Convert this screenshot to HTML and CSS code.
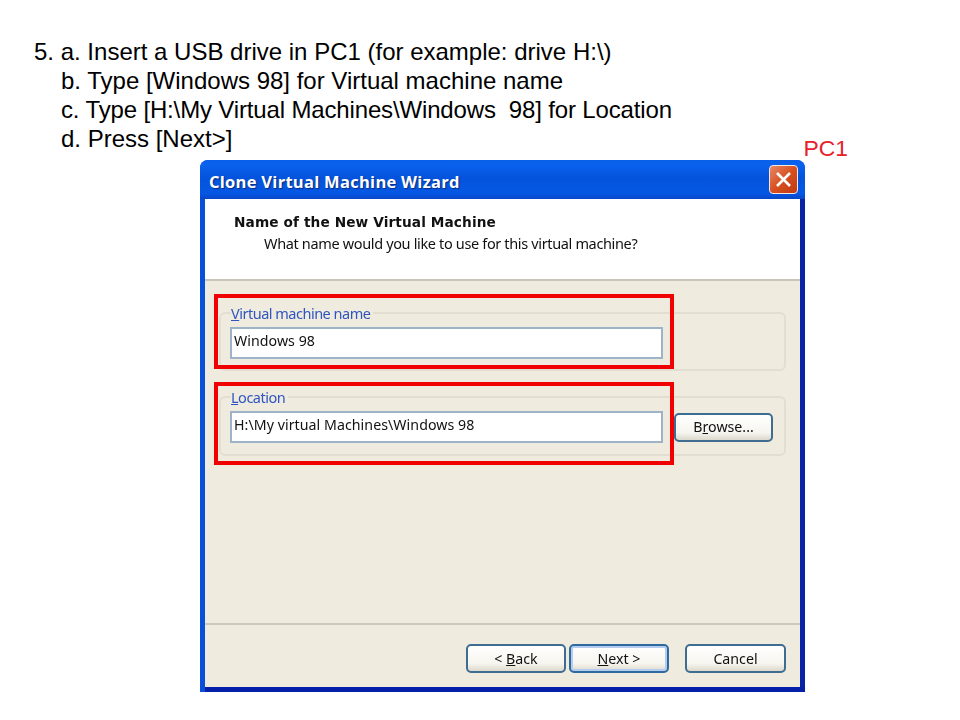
FILE: index.html
```html
<!DOCTYPE html>
<html lang="en">
<head>
  <meta charset="UTF-8" />
  <title>Clone Virtual Machine Wizard</title>
  <link rel="stylesheet" href="styles.css">
</head>
<body>
  <div class="slide">
    <div class="top">
      <div class="steps">
        <p>5. a. Insert a USB drive in PC1 (for example: drive H:\)</p>
        <p class="sub">b. Type [Windows 98] for Virtual machine name</p>
        <p class="sub tight">c. Type [H:\My Virtual Machines\Windows&nbsp; 98] for Location</p>
        <p class="sub">d. Press [Next&gt;]</p>
      </div>
      <div class="pc-label">PC1</div>
    </div>

    <div class="window">
      <div class="titlebar">
        <span class="title">Clone Virtual Machine Wizard</span>
        <div class="close">
          <svg width="19" height="19" viewBox="0 0 19 19">
            <path d="M3 3 L16 16 M16 3 L3 16" stroke="#fff" stroke-width="2.6" fill="none" />
          </svg>
        </div>
      </div>

      <div class="client">
        <div class="header">
          <h1>Name of the New Virtual Machine</h1>
          <p>What name would you like to use for this virtual machine?</p>
        </div>

        <div class="content">
          <div class="group name-group">
            <span class="legend"><u>V</u>irtual machine name</span>
            <input type="text" value="Windows 98">
          </div>
          <div class="group location-group">
            <span class="legend"><u>L</u>ocation</span>
            <div class="row">
              <input type="text" value="H:\My virtual Machines\Windows 98">
              <button class="browse">B<u>r</u>owse...</button>
            </div>
          </div>
          <div class="mark mark-name"></div>
          <div class="mark mark-location"></div>
        </div>

        <div class="footer">
          <button>&lt; <u>B</u>ack</button>
          <button class="default"><u>N</u>ext &gt;</button>
          <button class="cancel">Cancel</button>
        </div>
      </div>
    </div>
  </div>
</body>
</html>
```

FILE: styles.css
```css
body {
  margin: 0;
  background: #fff;
  font-family: "Liberation Sans", Arial, sans-serif;
}

.slide {
  width: 960px;
  height: 720px;
  overflow: hidden;
}

.top {
  height: 160px;
  display: flex;
  justify-content: space-between;
  box-sizing: border-box;
  padding: 37px 112px 0 34px;
}

.steps {
  font-size: 24px;
  line-height: 29px;
  color: #000;
}

.steps p {
  margin: 0;
}

.steps .sub {
  padding-left: 27px;
}

.steps .tight {
  letter-spacing: -0.15px;
}

.pc-label {
  color: #e8202a;
  font-size: 22.9px;
  line-height: 24px;
  margin-top: 99px;
}

.window {
  width: 605px;
  height: 532px;
  margin-left: 200px;
  display: flex;
  flex-direction: column;
  box-sizing: border-box;
  border-radius: 8px 8px 0 0;
  background: #0a4fd8;
  overflow: hidden;
  filter: blur(0.35px);
}

.titlebar {
  height: 39px;
  flex: none;
  display: flex;
  align-items: center;
  justify-content: space-between;
  padding: 0 7px 0 9px;
  background: linear-gradient(to bottom, #0a5fe8 0%, #0a62ee 12%, #0553dc 45%, #0558e4 85%, #0a46c8 100%);
}

.title {
  color: #fff;
  font-family: "Open Sans", sans-serif;
  font-weight: bold;
  font-size: 16.5px;
  letter-spacing: 0.28px;
  line-height: 22px;
  padding-top: 4px;
  text-shadow: 1px 1px 1px #0a2a80;
}

.close {
  width: 27px;
  height: 27px;
  display: flex;
  align-items: center;
  justify-content: center;
  border: 1px solid #f4e8e0;
  border-radius: 4px;
  background: linear-gradient(135deg, #e88868 0%, #d8501f 50%, #c03a14 100%);
}

.client {
  flex: 1;
  display: flex;
  flex-direction: column;
  margin: 0 5px 5px 5px;
  background: #efebdf;
  box-shadow: 5px 0 0 #0a22a4, 5px 5px 0 #0420a8, 0 5px 0 #0420a8;
}

.header {
  height: 82px;
  flex: none;
  box-sizing: border-box;
  background: #fff;
  border-bottom: 2px solid #c9c5b9;
  padding: 13px 0 0 29px;
  color: #111;
}

.header h1 {
  margin: 0;
  font-family: "DejaVu Sans", sans-serif;
  font-size: 13.7px;
  line-height: 20px;
  letter-spacing: 0.1px;
}

.header p {
  margin: 2px 0 0 30px;
  font-family: "Noto Sans", sans-serif;
  font-size: 14.5px;
  letter-spacing: -0.35px;
  line-height: 19px;
}

.content {
  flex: 1;
  position: relative;
  padding: 31px 14px 0;
}

.group {
  position: relative;
  box-sizing: border-box;
  border: 2px solid #e2dfd0;
  border-radius: 6px;
  padding: 13px 11px 0 9px;
}

.name-group {
  height: 59px;
  margin-bottom: 25px;
}

.location-group {
  height: 60px;
}

.legend {
  position: absolute;
  top: -10px;
  left: 10px;
  padding-right: 3px;
  background: #efebdf;
  color: #2f55c0;
  font-family: "Noto Sans", sans-serif;
  font-size: 14.5px;
  letter-spacing: -0.5px;
  line-height: 18px;
}

input {
  display: block;
  box-sizing: border-box;
  width: 433px;
  height: 32px;
  padding: 0 3px 5px 2px;
  border: 2px solid #9db4c8;
  background: #fff;
  color: #111;
  font-family: "Noto Sans", sans-serif;
  font-size: 14.2px;
  letter-spacing: 0.05px;
}

.row {
  display: flex;
  align-items: center;
  gap: 11px;
}

button {
  box-sizing: border-box;
  width: 100px;
  height: 29px;
  padding: 0 0 1px;
  border: 2px solid #3f6d92;
  border-radius: 5px;
  background: linear-gradient(to bottom, #fff 0%, #f6f5ef 70%, #dcd8cc 100%);
  color: #111;
  font-family: "Noto Sans", sans-serif;
  font-size: 14.2px;
}

.browse {
  width: 99px;
}

.default {
  box-shadow: inset 0 0 0 2px #b4ccf0;
  border-color: #2f6a9e;
}

.cancel {
  width: 101px;
  margin-left: 13px;
}

.mark {
  position: absolute;
  left: 9px;
  width: 460px;
  box-sizing: border-box;
  border: 4px solid #f00000;
}

.mark-name {
  top: 13px;
  height: 75px;
}

.mark-location {
  top: 101px;
  height: 83px;
}

.footer {
  height: 64px;
  flex: none;
  box-sizing: border-box;
  border-top: 2px solid #cdc9bd;
  padding: 19px 14px 0 0;
  display: flex;
  justify-content: flex-end;
  gap: 3px;
}
```
